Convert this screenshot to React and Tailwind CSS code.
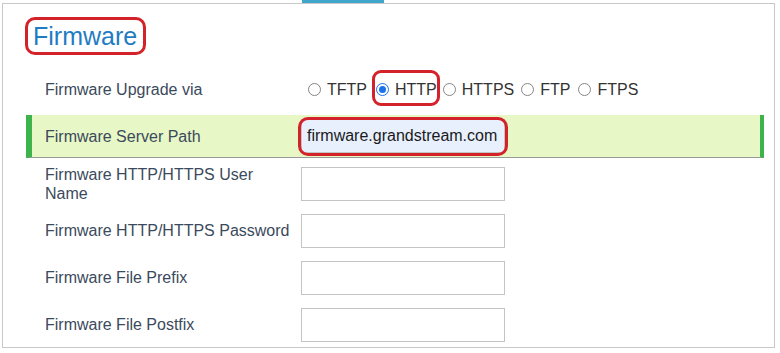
import React from "react";

function Radio({ label, checked, annotate, ml }) {
  return (
    <span className={"relative inline-flex items-center " + ml}>
      {annotate && (
        <span className="pointer-events-none absolute left-[-4px] right-[-3px] top-[-10px] bottom-[-7px] border-[3px] border-[#d3222a] rounded-[9px]" />
      )}
      <span
        className={
          checked
            ? "w-[13px] h-[13px] rounded-full border-[1.5px] border-[#1a73e8] bg-white flex items-center justify-center"
            : "w-[13px] h-[13px] rounded-full border border-[#858585] bg-white"
        }
      >
        {checked && <span className="w-[7px] h-[7px] rounded-full bg-[#1a73e8]" />}
      </span>
      <span className="ml-[6px] text-[16px] leading-[19px] text-[#333]">{label}</span>
    </span>
  );
}

function Row({ label, children, highlight }) {
  return (
    <div
      className={
        highlight
          ? "flex items-center h-[43px] border-l-[6px] border-r-[4px] border-b border-l-[#3cb44b] border-r-[#3cb44b] border-b-[#9a9a9a] bg-[#e7f7c6] pl-[13px]"
          : "flex items-center h-[43px] border-l-[6px] border-r-[4px] border-transparent pl-[13px]"
      }
    >
      <div className="w-[256px] pr-[6px] shrink-0 text-[16px] leading-[19px] text-[#3b4a5c]">{label}</div>
      {children}
    </div>
  );
}

function TextBox() {
  return <div className="w-[204px] h-[34px] border border-[#c4c4c4] bg-white" />;
}

export default function App() {
  return (
    <div className="w-[780px] h-[353px] bg-white overflow-hidden font-['Liberation_Sans',Arial,sans-serif]">
      <div className="ml-[302px] h-[3px] w-[82px] bg-[#42a5cc]" />
      <div className="ml-[2px] w-[773px] h-[345px] border border-[#c8c8c8]">
        <div className="pt-[13px] pl-[22px]">
          <div className="inline-block border-[3px] border-[#d3222a] rounded-[10px] pl-[5px] pr-[6px]">
            <h1 className="text-[25px] leading-[32px] text-[#1f7cc2]">Firmware</h1>
          </div>
        </div>
        <div className="mt-[13px] ml-[23px] mr-[10px] flex flex-col gap-[4px]">
          <Row label="Firmware Upgrade via">
            <div className="flex items-center">
              <Radio label="TFTP" ml="ml-[7px]" />
              <Radio label="HTTP" checked annotate ml="ml-[9px]" />
              <Radio label="HTTPS" ml="ml-[6px]" />
              <Radio label="FTP" ml="ml-[7px]" />
              <Radio label="FTPS" ml="ml-[8px]" />
            </div>
          </Row>
          <Row label="Firmware Server Path" highlight>
            <div className="relative">
              <div className="w-[204px] h-[34px] border border-[#c4c4c4] bg-[#e8f0fe] flex items-center pl-[5px] text-[16px] text-[#1a1a1a] whitespace-nowrap">
                firmware.grandstream.com
              </div>
              <span className="pointer-events-none absolute left-[-3px] right-[-3px] top-[-2px] bottom-[-3px] border-[3px] border-[#d3222a] rounded-[10px]" />
            </div>
          </Row>
          <Row label="Firmware HTTP/HTTPS User Name">
            <TextBox />
          </Row>
          <Row label={<span className="whitespace-nowrap">Firmware HTTP/HTTPS Password</span>}>
            <TextBox />
          </Row>
          <Row label="Firmware File Prefix">
            <TextBox />
          </Row>
          <Row label="Firmware File Postfix">
            <TextBox />
          </Row>
        </div>
      </div>
    </div>
  );
}
